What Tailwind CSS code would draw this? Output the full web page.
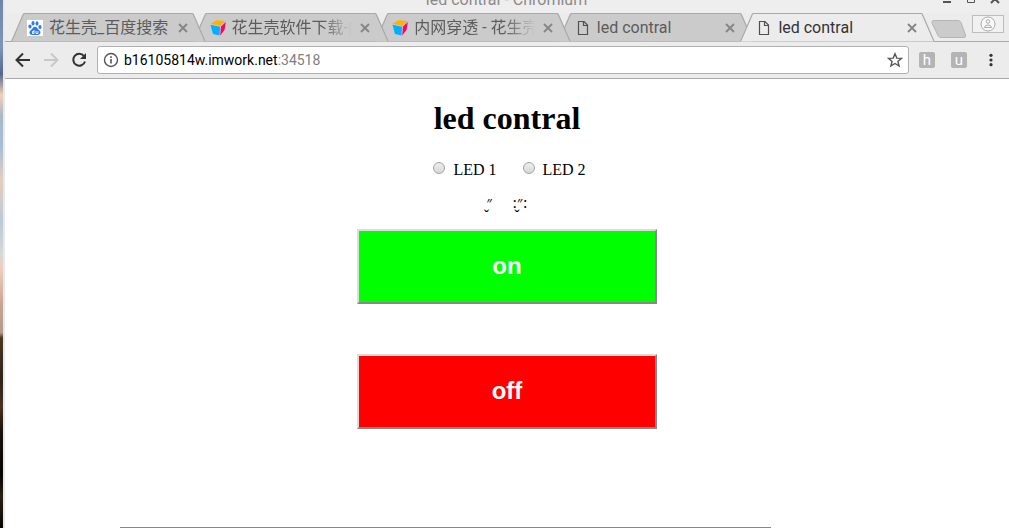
<!DOCTYPE html>
<html lang="zh">
<head>
<meta charset="utf-8">
<meta name="viewport" content="width=device-width, initial-scale=1">
<title>led contral</title>
<script src="https://cdn.jsdelivr.net/npm/@tailwindcss/browser@4"></script>
</head>
<body class="bg-white">
<svg class="hidden">
  <symbol id="tab" viewBox="0 0 195 29" preserveAspectRatio="none"><path d="M0.5 28.5L12 2Q12.500 .5 14 .5H181Q182.500 .5 183 2L194.500 28.500" stroke="#a9a9a6" stroke-width="1.200"/></symbol>
  <symbol id="close" viewBox="0 0 10 10"><path d="M1 1L9 9M9 1L1 9" stroke="#858585" stroke-width="1.800" fill="none"/></symbol>
  <symbol id="page" viewBox="0 0 16 16"><path d="M3.500 1.500H9L12.500 5V14.500H3.500ZM8.500 1.500V5.500H12.500" stroke="#505050" stroke-width="1.200" fill="none"/></symbol>
  <symbol id="cube" viewBox="0 0 16 16"><path d="M.5 3.800L6.500 .3L15.500 1L10.500 6Z" fill="#ffb000"/><path d="M.5 4.800L10 6.800L9.500 15.500L3 14Z" fill="#00b0ff"/><path d="M11 6.500L15.800 2L14.500 10L10.200 15.500Z" fill="#ff0066"/></symbol>
</svg>
<div class="flex min-h-screen">
  <div class="w-[5px] shrink-0 border-r-2 border-[#e6e8ea] bg-[linear-gradient(#6f86a8_0%,#8095b4_9%,#52688e_14%,#f3cfb9_18%,#a9b8c8_22%,#a8bfd5_28%,#e6cdbe_34%,#b9c9d8_42%,#d7d8d8_48%,#efcdb9_51%,#c9a28e_58%,#b59a8d_63%,#4b3821_64%,#30231a_72%,#4a321d_77%,#17110c_82%,#070503_90%,#2b2010_94%,#050505_100%)]"></div>
  <div class="flex min-w-0 flex-1 flex-col">
    <header class="bg-[#ececec]">
      <div class="flex h-[13px] overflow-hidden bg-[#eeeeee]">
        <div class="w-[9px]"></div>
        <div class="-mt-[10px] flex-1 pl-16 text-center font-[Roboto,sans-serif] text-[16px] leading-[20px] text-[#8a8a8a]">led contral - Chromium</div>
        <div class="-mt-[5px] flex w-[74px] gap-[14px] pl-[7px]">
          <button aria-label="Minimize" class="h-[10px] w-[10px]"><svg viewBox="0 0 10 10"><path d="M1 7H9" stroke="#555" stroke-width="2"/></svg></button>
          <button aria-label="Maximize" class="h-[10px] w-[10px]"><svg viewBox="0 0 10 10"><path d="M1.500 .5H8.500V7.500H1.500Z" stroke="#555" fill="none"/></svg></button>
          <button aria-label="Close window" class="h-[10px] w-[10px]"><svg viewBox="0 0 10 10"><path d="M1 0L9 8M9 0L1 8" stroke="#555" stroke-width="2"/></svg></button>
        </div>
      </div>
      <div class="flex h-[29px] pl-[6px] font-[Roboto,'Noto_Sans_CJK_SC',sans-serif] text-[16px] leading-[28px] text-[#5c5c5c] shadow-[inset_0_-1px_#a9a9a9]">
        <nav class="isolate flex min-w-0 flex-1">
          <div class="relative z-40 flex min-w-0 flex-1 items-center pr-[18px] pl-4">
            <svg class="absolute inset-0 -z-10 h-full w-full fill-[#cbcbcb]"><use href="#tab"/></svg>
            <svg class="h-4 w-4 shrink-0" viewBox="0 0 16 16"><path d="M0 0H16V16H0Z" fill="#fff"/><g fill="#2e79f0"><ellipse cx="3" cy="6.500" rx="1.600" ry="2.100"/><ellipse cx="6" cy="3.300" rx="1.500" ry="2.200"/><ellipse cx="10" cy="3.400" rx="1.500" ry="2.200"/><ellipse cx="13" cy="7" rx="1.600" ry="2.100"/><path d="M8 6.800C10 6.800 10.500 9 12.500 10.500C14.800 12.500 13 15.800 8 15C3 15.800 1 12.500 3.500 10.500C5.500 9 6 6.800 8 6.800Z"/></g><path d="M7 10V13.500H5.500V11.500H7M9 11V13.500H11V11" fill="none" stroke="#fff" stroke-width=".9"/></svg>
            <a href="#" class="ml-[6px] min-w-0 flex-1 overflow-hidden whitespace-nowrap">花生壳_百度搜索</a>
            <button aria-label="Close tab" class="ml-2 h-[10px] w-[10px] shrink-0"><svg class="h-full w-full"><use href="#close"/></svg></button>
          </div>
          <div class="relative z-30 -ml-[13px] flex min-w-0 flex-1 items-center pr-[18px] pl-[17px]">
            <svg class="absolute inset-0 -z-10 h-full w-full fill-[#cbcbcb]"><use href="#tab"/></svg>
            <svg class="h-4 w-4 shrink-0"><use href="#cube"/></svg>
            <a href="#" class="ml-[6px] min-w-0 flex-1 overflow-hidden mask-r-from-75% mask-r-to-100% whitespace-nowrap">花生壳软件下载-内</a>
            <button aria-label="Close tab" class="ml-2 h-[10px] w-[10px] shrink-0"><svg class="h-full w-full"><use href="#close"/></svg></button>
          </div>
          <div class="relative z-20 -ml-[13px] flex min-w-0 flex-1 items-center pr-[18px] pl-[17px]">
            <svg class="absolute inset-0 -z-10 h-full w-full fill-[#cbcbcb]"><use href="#tab"/></svg>
            <svg class="h-4 w-4 shrink-0"><use href="#cube"/></svg>
            <a href="#" class="ml-[6px] min-w-0 flex-1 overflow-hidden mask-r-from-75% mask-r-to-100% whitespace-nowrap">内网穿透 - 花生壳</a>
            <button aria-label="Close tab" class="ml-2 h-[10px] w-[10px] shrink-0"><svg class="h-full w-full"><use href="#close"/></svg></button>
          </div>
          <div class="relative z-10 -ml-[13px] flex min-w-0 flex-1 items-center pr-[18px] pl-[17px]">
            <svg class="absolute inset-0 -z-10 h-full w-full fill-[#cbcbcb]"><use href="#tab"/></svg>
            <svg class="h-4 w-4 shrink-0"><use href="#page"/></svg>
            <a href="#" class="ml-[6px] min-w-0 flex-1 overflow-hidden whitespace-nowrap">led contral</a>
            <button aria-label="Close tab" class="ml-2 h-[10px] w-[10px] shrink-0"><svg class="h-full w-full"><use href="#close"/></svg></button>
          </div>
          <div class="relative z-50 -ml-[13px] flex min-w-0 flex-1 items-center pr-[18px] pl-4 text-[#333]">
            <svg class="absolute inset-0 -z-10 h-full w-full fill-[#ececec]"><use href="#tab"/></svg>
            <svg class="h-4 w-4 shrink-0"><use href="#page"/></svg>
            <a href="#" aria-current="page" class="ml-[6px] min-w-0 flex-1 overflow-hidden whitespace-nowrap">led contral</a>
            <button aria-label="Close tab" class="ml-2 h-[10px] w-[10px] shrink-0"><svg class="h-full w-full"><use href="#close"/></svg></button>
          </div>
        </nav>
        <div class="flex w-[74px] shrink-0 items-start justify-between pr-[5px]">
          <button aria-label="New tab" class="-ml-[4px] mt-[7px] h-[19px] w-[36px]"><svg viewBox="0 0 36 19"><path d="M2.500 .5H27Q29 .5 30 2.500L34.500 15Q35 17.500 33 17.500H10Q8 17.500 7 15.500L1 3Q.5 .5 2.500 .5Z" fill="#cbcbcb" stroke="#b5b5b5"/></svg></button>
          <button aria-label="Profile" class="mt-[2px] flex h-[18px] w-8 items-center justify-center border border-[#bdbdbd] bg-[#f1f1f1]"><svg class="h-4 w-4" viewBox="0 0 16 16" fill="none" stroke="#aaa"><circle cx="8" cy="8" r="7" fill="#fafafa"/><circle cx="8" cy="5.500" r="1.800"/><path d="M4.500 11.500Q4.500 9 8 9T11.500 11.500Z"/></svg></button>
        </div>
      </div>
      <div class="flex h-[37px] items-center border-b border-[#aaa] pl-[10px] font-[Roboto,sans-serif]">
        <button aria-label="Back" class="h-4 w-4"><svg viewBox="0 0 16 16"><path d="M15 8H2M8 1.500L1.500 8L8 14.500" fill="none" stroke="#333" stroke-width="2"/></svg></button>
        <button aria-label="Forward" class="ml-3 h-4 w-4"><svg viewBox="0 0 16 16"><path d="M1 8H14M8 1.500L14.500 8L8 14.500" fill="none" stroke="#c8c8c8" stroke-width="2"/></svg></button>
        <button aria-label="Reload" class="ml-3 h-4 w-4"><svg viewBox="0 0 16 16"><path d="M13 4A6 6 0 1 0 14 9.500" fill="none" stroke="#333" stroke-width="2"/><path d="M15 1V7H9Z" fill="#333"/></svg></button>
        <div class="ml-[10px] flex h-7 flex-1 items-center rounded-[3px] border border-[#b0b0b0] bg-white pr-[5px] pl-[5px]">
          <svg class="h-4 w-4" viewBox="0 0 16 16"><circle cx="8" cy="8" r="6.500" fill="none" stroke="#555" stroke-width="1.400"/><path d="M8 7V11.500M8 4.300V5.900" stroke="#555" stroke-width="1.600"/></svg>
          <div role="textbox" aria-label="Address" contenteditable="true" class="ml-[5px] flex-1 text-[14px] leading-5 text-black">b16105814w.imwork.net<span class="text-[#808080]">:34518</span></div>
          <button aria-label="Bookmark" class="h-4 w-4"><svg viewBox="0 0 16 16"><path d="M8 1.800L9.800 6.100L14.500 6.400L10.900 9.400L12.100 14L8 11.500L3.900 14L5.100 9.400L1.500 6.400L6.200 6.100Z" fill="none" stroke="#555" stroke-width="1.400"/></svg></button>
        </div>
        <button class="ml-[10px] h-4 w-4 rounded-[2px] bg-[#b4b4b4] text-[15px] leading-4 text-white">h</button>
        <button class="ml-4 h-4 w-4 rounded-[2px] bg-[#b4b4b4] text-[15px] leading-4 text-white">u</button>
        <button aria-label="Menu" class="mr-[10px] ml-4 h-4 w-4"><svg viewBox="0 0 16 16" fill="#333"><circle cx="8" cy="3.300" r="1.600"/><circle cx="8" cy="8" r="1.600"/><circle cx="8" cy="12.700" r="1.600"/></svg></button>
      </div>
    </header>
    <main class="flex flex-1 flex-col items-center pt-[21px] font-['Liberation_Serif',serif] text-[16px] leading-[18px] text-black">
      <h1 class="text-[32px] leading-[37px] font-bold">led contral</h1>
      <div class="mt-6 flex gap-[26px] pl-[5px]">
        <label class="flex items-center gap-2"><input type="radio" name="led" class="mb-1 h-3 w-3 appearance-none rounded-full border border-[#a4a4a4] bg-linear-to-b from-[#ededed] to-[#d8d8d8]">LED 1</label>
        <label class="flex items-center gap-2"><input type="radio" name="led" class="mb-1 h-3 w-3 appearance-none rounded-full border border-[#a4a4a4] bg-linear-to-b from-[#ededed] to-[#d8d8d8]">LED 2</label>
      </div>
      <p class="mt-[15px] flex gap-5"><span>״̬</span><span>:״̬:</span></p>
      <button class="mt-[17px] h-[75px] w-[300px] border-2 border-t-[#dcdcdc] border-r-[#888] border-b-[#888] border-l-[#dcdcdc] bg-[#00ff00] pb-[2px] font-['Liberation_Sans',sans-serif] text-[24px] font-bold text-white">on</button>
      <button class="mt-[50px] h-[75px] w-[300px] border-2 border-t-[#dcdcdc] border-r-[#888] border-b-[#888] border-l-[#dcdcdc] bg-[#ff0000] pb-[2px] font-['Liberation_Sans',sans-serif] text-[24px] font-bold text-white">off</button>
      <hr class="mt-auto mr-[123px] w-[651px] border-t border-[#5590de]">
    </main>
  </div>
</div>
</body>
</html>
